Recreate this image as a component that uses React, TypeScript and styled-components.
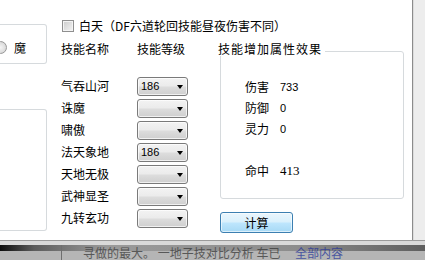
import { FC } from "react";
import styled, { createGlobalStyle } from "styled-components";

const skills = [
  { name: "气吞山河", level: "186" },
  { name: "诛魔", level: "" },
  { name: "啸傲", level: "" },
  { name: "法天象地", level: "186" },
  { name: "天地无极", level: "" },
  { name: "武神显圣", level: "" },
  { name: "九转玄功", level: "" },
];

const stats = [
  { label: "伤害", value: "733", serif: false },
  { label: "防御", value: "0", serif: false },
  { label: "灵力", value: "0", serif: false },
  { label: "", value: "", serif: false },
  { label: "命中", value: "413", serif: true },
];

const App: FC = () => {
  return (
    <>
      <GlobalStyle />
      <Screen>
        <Body>
          <Window>
            <SideColumn>
              <SideBox $height={40}>
                <Radio />
                <SideLabel>魔</SideLabel>
              </SideBox>
              <SideBox $height={122} />
            </SideColumn>
            <Panel>
              <CheckRow>
                <CheckBox />
                <span>白天（DF六道轮回技能昼夜伤害不同）</span>
              </CheckRow>
              <Columns>
                <SkillColumn>
                  <HeaderRow>
                    <NameCell>技能名称</NameCell>
                    <span>技能等级</span>
                  </HeaderRow>
                  <SkillList>
                    {skills.map(({ name, level }) => (
                      <SkillRow key={name}>
                        <NameCell>{name}</NameCell>
                        <Combo>
                          <ComboText>{level}</ComboText>
                          <ComboArrow />
                        </Combo>
                      </SkillRow>
                    ))}
                  </SkillList>
                </SkillColumn>
                <EffectColumn>
                  <GroupBox>
                    <GroupTitle>技能增加属性效果</GroupTitle>
                    {stats.map(({ label, value, serif }, i) => (
                      <StatRow key={i}>
                        <StatLabel>{label}</StatLabel>
                        <StatValue $serif={serif}>{value}</StatValue>
                      </StatRow>
                    ))}
                  </GroupBox>
                  <CalcButton>计算</CalcButton>
                </EffectColumn>
              </Columns>
            </Panel>
          </Window>
          <SideStrip />
        </Body>
        <TaskStrip>
          <TaskHighlight />
          <TaskBand>
            <TaskLeft />
            <TaskText>
              寻做的最大。 一地子技对比分析 车已 <TaskLink>全部内容</TaskLink>
            </TaskText>
          </TaskBand>
        </TaskStrip>
      </Screen>
    </>
  );
};

const GlobalStyle = createGlobalStyle`
  html, body {
    margin: 0;
    padding: 0;
    background: #ffffff;
  }
  body {
    font-family: "Noto Sans CJK SC", "DejaVu Sans", sans-serif;
    font-size: 12px;
    color: #000000;
  }
`;

const Screen = styled.div`
  width: 425px;
  height: 260px;
  overflow: hidden;
  display: flex;
  flex-direction: column;
`;

const Body = styled.div`
  display: flex;
  height: 240px;
`;

const Window = styled.div`
  width: 412px;
  display: flex;
  background: #ffffff;
  border-right: 1px solid #8c8c8c;
`;

const SideStrip = styled.div`
  flex: 1;
  background: #ededed;
  border-left: 1px solid #dcdcdc;
`;

const SideColumn = styled.div`
  width: 47px;
  display: flex;
  flex-direction: column;
  gap: 45px;
  padding-top: 24px;
  box-sizing: border-box;
`;

const SideBox = styled.div<{ $height: number }>`
  height: ${(p) => p.$height}px;
  box-sizing: border-box;
  border: 1px solid #d6dadd;
  border-left: none;
  border-radius: 0 3px 3px 0;
  display: flex;
  align-items: center;
  align-self: stretch;
  padding-top: 6px;
  overflow: hidden;
`;

const Radio = styled.div`
  width: 13px;
  height: 13px;
  margin-left: -6px;
  box-sizing: border-box;
  border-radius: 50%;
  border: 1px solid #979797;
  background: radial-gradient(circle at 50% 50%, #f4f4f4 0, #dedede 60%, #cbcbcb 100%);
  flex-shrink: 0;
`;

const SideLabel = styled.span`
  margin-left: 7px;
  line-height: 13px;
`;

const Panel = styled.div`
  flex: 1;
  padding: 19px 0 0 14px;
  display: flex;
  flex-direction: column;
`;

const CheckRow = styled.label`
  display: flex;
  align-items: center;
  gap: 5px;
  height: 13px;
  line-height: 13px;
  margin-left: 1px;
  white-space: nowrap;
`;

const CheckBox = styled.span`
  width: 12px;
  height: 12px;
  box-sizing: border-box;
  border: 1px solid #8f8f8f;
  box-shadow: inset 0 0 0 1px #f4f4f4;
  background: linear-gradient(135deg, #cbcbcb 0%, #e2e2e2 55%, #f3f3f3 100%);
  flex-shrink: 0;
`;

const Columns = styled.div`
  display: flex;
`;

const SkillColumn = styled.div`
  width: 159px;
  display: flex;
  flex-direction: column;
`;

const HeaderRow = styled.div`
  display: flex;
  height: 14px;
  line-height: 14px;
  margin-top: 10px;
  white-space: nowrap;
`;

const NameCell = styled.span`
  width: 76px;
  flex-shrink: 0;
  white-space: nowrap;
`;

const SkillList = styled.div`
  display: flex;
  flex-direction: column;
  margin-top: 19px;
`;

const SkillRow = styled.div`
  display: flex;
  align-items: center;
  height: 22px;
  line-height: 14px;
`;

const Combo = styled.div`
  width: 51px;
  height: 19px;
  box-sizing: border-box;
  border: 1px solid #7a7a7a;
  border-radius: 3px;
  background: linear-gradient(#f3f3f3 0%, #ebebeb 48%, #dddddd 52%, #cfcfcf 100%);
  box-shadow: inset 0 0 0 1px rgba(255, 255, 255, 0.7);
  display: flex;
  align-items: center;
  padding: 0 4px 0 3px;
`;

const ComboText = styled.span`
  flex: 1;
  font-family: "Liberation Sans", Arial, sans-serif;
  font-size: 11px;
  line-height: 12px;
`;

const ComboArrow = styled.span`
  width: 0;
  height: 0;
  border-left: 3.5px solid transparent;
  border-right: 3.5px solid transparent;
  border-top: 4px solid #000000;
  margin-top: 1px;
`;

const EffectColumn = styled.div`
  display: flex;
  flex-direction: column;
  align-items: flex-start;
`;

const GroupBox = styled.div`
  position: relative;
  width: 184px;
  height: 148px;
  margin-top: 19px;
  box-sizing: border-box;
  border: 1px solid #d6dadd;
  border-radius: 3px;
  padding: 24px 0 0 24px;
  display: flex;
  flex-direction: column;
`;

const GroupTitle = styled.span`
  position: absolute;
  top: -10px;
  left: -3px;
  padding: 0 3px 0 0;
  background: #ffffff;
  line-height: 14px;
  white-space: nowrap;
  letter-spacing: 1px;
`;

const StatRow = styled.div`
  display: flex;
  align-items: center;
  height: 21px;
  line-height: 14px;
`;

const StatLabel = styled.span`
  width: 35px;
  flex-shrink: 0;
`;

const StatValue = styled.span<{ $serif: boolean }>`
  font-family: ${(p) =>
    p.$serif ? '"Liberation Serif", "Times New Roman", serif' : '"Liberation Sans", Arial, sans-serif'};
  font-size: ${(p) => (p.$serif ? 13 : 11)}px;
`;

const CalcButton = styled.button`
  margin-top: 13px;
  width: 73px;
  height: 21px;
  box-sizing: border-box;
  border: 1px solid #3c7fb1;
  border-radius: 3px;
  background: linear-gradient(#eaf6fd 0%, #d9f0fc 48%, #bee6fd 52%, #a7d9f5 100%);
  box-shadow: inset 0 0 0 1px rgba(255, 255, 255, 0.6);
  font-family: "Noto Sans CJK SC", sans-serif;
  font-size: 12px;
  line-height: 14px;
  color: #000000;
  padding: 0;
`;

const TaskStrip = styled.div`
  flex: 1;
  display: flex;
  flex-direction: column;
  border-top: 1px solid #9b9b9b;
`;

const TaskHighlight = styled.div`
  height: 4px;
  background: #d9d9d9;
`;

const TaskBand = styled.div`
  flex: 1;
  display: flex;
  background: linear-gradient(
        to right,
        #0c0c0c 0%,
        #5c5c5c 8%,
        #9a9a9a 25%,
        #8c8c8c 70%,
        #5e5e5e 100%
      )
      top / 100% 6px no-repeat,
    #b5b5b5;
`;

const TaskLeft = styled.div`
  width: 61px;
  border-right: 1px solid #6e6e6e;
`;

const TaskText = styled.span`
  padding-left: 21px;
  font-size: 12px;
  line-height: 15px;
  color: #3a3a3a;
  white-space: nowrap;
  opacity: 0.75;
`;

const TaskLink = styled.span`
  color: #26359a;
  margin-left: 12px;
`;

export default App;
